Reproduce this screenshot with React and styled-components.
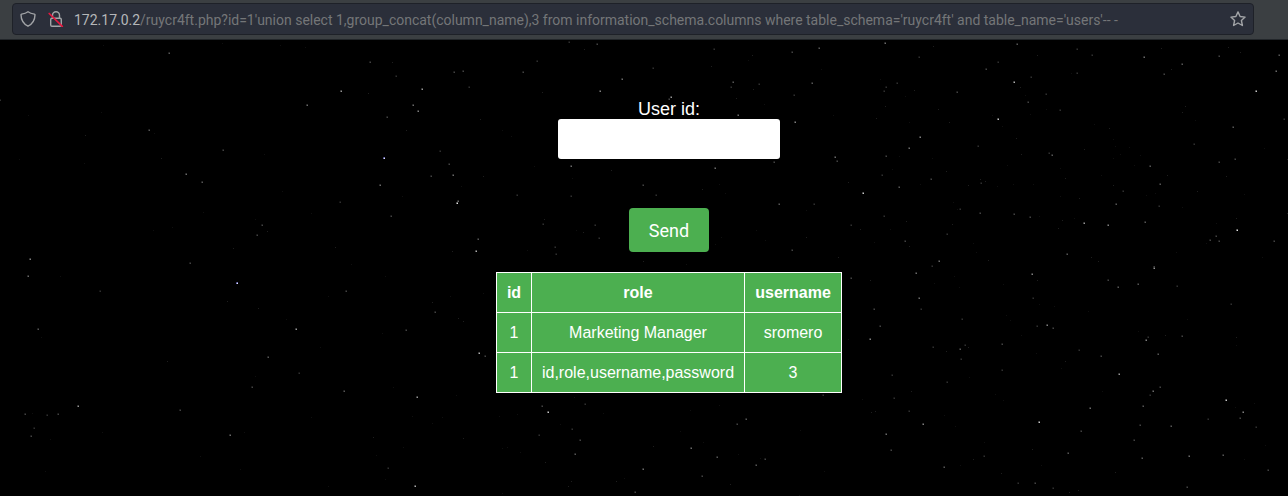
import React from "react";
import styled, { createGlobalStyle } from "styled-components";

const GlobalStyle = createGlobalStyle`
  * { box-sizing: border-box; }
  body {
    margin: 0;
    background: #000;
    font-family: "Liberation Sans", Arial, sans-serif;
    overflow: hidden;
  }
`;

const Window = styled.div`
  display: flex;
  flex-direction: column;
  height: 496px;
`;

const Toolbar = styled.header`
  flex: none;
  height: 40px;
  padding: 3px 34px 0 12px;
  background: #3b3f42;
  border-bottom: 1px solid #22262a;
`;

const AddressBar = styled.div`
  display: flex;
  align-items: center;
  height: 32px;
  padding: 0 7px;
  background: #2b2f3a;
  border: 1px solid #1e2128;
  border-radius: 4px;
`;

const BarIcon = styled.svg`
  flex: none;
  display: block;
  width: 16px;
  height: 16px;
  margin-right: ${(p) => p.$gap || 0}px;
  fill: none;
  stroke: #a2a4a7;
  stroke-width: 1.4;
  stroke-linecap: round;
  stroke-linejoin: round;
`;

const Url = styled.div`
  flex: 1;
  padding-top: 2px;
  font: 14px/20px Roboto, sans-serif;
  letter-spacing: -0.007px;
  color: #747678;
  white-space: nowrap;
`;

const Host = styled.span`
  color: #b5b7b9;
`;

const Page = styled.main`
  position: relative;
  flex: 1;
  padding: 59px 0 0 50px;
  color: #fff;
`;

const Sky = styled.svg`
  position: absolute;
  inset: 0;
  width: 1288px;
  height: 456px;
  shape-rendering: crispEdges;
`;

const Content = styled.div`
  position: relative;
  display: flex;
  flex-direction: column;
  align-items: center;
`;

const Form = styled.form`
  display: flex;
  flex-direction: column;
  align-items: center;
`;

const Label = styled.label`
  font-size: 18px;
  line-height: 20px;
`;

const TextInput = styled.input`
  width: 222px;
  height: 40px;
  padding: 10px;
  border: 0;
  border-radius: 3px;
  background: #fff;
  outline: none;
`;

const SendButton = styled.button`
  width: 80px;
  height: 44px;
  margin-top: 49px;
  padding: 2px 0 0;
  border: 0;
  border-radius: 4px;
  background: #4caf50;
  color: #fff;
  font: 18px/22px Roboto, sans-serif;
`;

const Table = styled.table`
  margin-top: 20px;
  width: 346px;
  table-layout: fixed;
  border-collapse: collapse;
  background: #4caf50;
  font-size: 16px;
  line-height: 19px;
  text-align: center;
`;

const Col = styled.col`
  width: ${(p) => p.$w}px;
`;

const Cell = styled.td`
  height: 40px;
  padding: 0;
  border: 1px solid #fff;
  white-space: nowrap;
`;

/* Star field in tiles: origin, then [x, y, brightness] in thirds of a pixel. */
const TILES = [
  { ox: 0, oy: 0, stars: [
    [508,41,5],[1112,67,4],[1177,68,2],[1190,110,3],[1025,154,8],[1267,149,8],[1106,160,2],[922,196,6],
    [1241,197,6],[1256,215,7],[1161,231,4],[85,225,1],[303,217,1],[449,271,5],[257,286,2],[462,279,1],
    [1219,271,2],[670,330,4],[794,343,1],[484,355,2],[57,358,1],[252,370,1],[1152,355,11],[560,403,6],
    [608,426,5],[1141,435,6],[848,455,1],[1021,488,3],[1175,530,4],[788,557,4],[773,587,4],[803,573,2],
    [767,539,1],[699,624,2],[1006,622,2],[92,659,7],[570,671,4],[460,570,1],[516,563,1],[1054,673,1],
    [1,181,3],[668,9,1],[842,16,1],[916,23,1],[310,17,1],[934,519,1],[1208,469,1],[611,517,1]] },
  { ox: 430, oy: 0, stars: [
    [419,6,3],[503,13,4],[463,27,2],[323,64,3],[73,98,4],[99,95,4],[118,143,3],[279,96,4],[337,158,2],
    [577,119,6],[510,155,7],[669,84,3],[725,171,8],[719,179,4],[852,27,3],[844,80,2],[968,46,2],
    [956,62,1],[1086,38,4],[1168,26,5],[1174,88,1],[909,128,5],[904,143,3],[988,133,3],[971,149,2],
    [1146,130,5],[1093,166,3],[920,176,2],[925,226,6],[1095,247,7],[1003,192,1],[1211,225,1],
    [152,237,2],[217,272,1],[243,289,1],[32,334,3],[59,374,4],[3,408,4],[69,405,6],[160,410,2],[95,438,1],
    [313,378,1],[425,380,6],[545,391,2],[427,416,1],[424,468,3],[261,465,3],[82,490,11],[84,483,6],
    [641,437,4],[679,466,3],[817,447,2],[857,385,6],[867,434,1],[886,461,1],[1032,368,4],[1217,351,6],
    [1223,363,4],[1255,426,2],[1048,494,5],[1154,492,3],[1129,510,1],[1265,557,3],[344,537,2],[339,552,3],
    [495,557,3],[460,577,2],[440,571,1],[508,596,3],[146,599,5],[138,633,9],[67,633,2],[376,622,3],
    [379,644,3],[292,631,1],[641,663,2],[874,592,1],[855,613,1],[1005,600,1],[1086,630,4],[1225,652,2],
    [1130,592,2],[769,673,1],[759,600,1],[980,570,1]] },
  { ox: 858, oy: 0, stars: [
    [82,11,6],[185,52,3],[225,19,2],[477,14,5],[421,68,3],[385,87,4],[537,45,2],[659,28,3],[704,47,3],
    [859,53,6],[909,24,2],[1112,23,2],[1146,38,2],[1085,49,4],[1263,46,5],[1255,95,6],[973,73,5],[941,89,2],
    [918,103,4],[658,99,3],[640,101,1],[521,111,3],[469,127,9],[486,142,2],[503,165,1],[565,163,3],
    [512,188,4],[606,211,3],[565,208,1],[516,223,1],[117,130,3],[84,143,3],[79,155,3],[68,119,1],[83,199,2],
    [56,235,2],[169,150,2],[142,168,1],[299,156,4],[240,208,2],[273,248,2],[155,248,1],[421,237,10],
    [402,225,1],[433,260,1],[186,292,7],[155,326,6],[85,349,4],[123,348,1],[224,355,1],[361,320,3],
    [476,295,2],[491,344,2],[575,341,3],[582,345,5],[680,327,2],[753,265,2],[709,252,1],[767,299,1],
    [772,318,1],[788,344,1],[813,321,1],[765,354,1],[848,347,1],[877,378,5],[830,377,1],[928,405,2],
    [908,434,5],[892,460,1],[864,467,1],[905,500,3],[1008,314,3],[1012,241,1],[983,200,2],[974,216,2],
    [1194,155,10],[1127,261,5],[1278,237,3],[1220,326,1],[1085,366,4],[1133,359,4],[1104,408,2],
    [1017,454,2],[973,501,1],[103,388,1],[74,405,3],[125,441,5],[15,461,10],[221,419,4],[187,432,1],
    [264,393,2],[332,436,2],[366,419,2],[371,430,3],[381,423,2],[419,440,1],[467,432,1],[448,377,1],
    [526,433,1],[607,385,1],[622,415,2],[729,407,1],[765,437,2],[664,476,2],[606,469,1],[797,455,3],
    [776,494,5],[298,507,1],[307,507,3],[285,486,1],[368,521,4],[468,524,4],[516,533,4],[545,529,1],
    [614,540,2],[679,551,8],[750,556,7],[863,548,5],[648,534,1],[80,529,3],[146,545,2],[97,567,1],
    [6,567,2],[49,607,1],[143,605,4],[154,619,2],[269,584,3],[284,554,2],[345,609,1],[354,636,1],
    [243,665,6],[222,680,3],[391,660,2],[601,566,2],[629,644,5],[699,651,2],[721,664,2],[888,683,7],
    [954,636,1],[1137,571,11],[1134,536,2],[1074,549,1],[1076,588,4],[1056,601,4],[1085,605,4],[1044,609,1],
    [1250,603,4],[1287,521,2],[1287,357,2],[1160,463,1],[1214,651,1]] },
  { ox: 0, oy: 228, stars: [
    [84,24,6],[180,26,1],[300,69,3],[712,47,11],[683,100,2],[776,122,2],[858,153,1],[889,184,8],
    [1040,69,4],[985,85,1],[1157,25,1],[1220,186,4],[1148,195,1],[961,238,1],[116,184,5],[123,208,1],
    [503,280,2],[804,267,5],[897,315,3],[757,358,4],[767,324,1],[1032,370,5],[1180,359,1],[1251,389,8],
    [235,416,8],[75,439,4],[143,441,3],[174,439,4],[98,436,1],[103,481,3],[94,505,4],[152,513,1],
    [540,427,4],[691,501,6],[732,492,1],[306,492,1],[1238,446,1],[1120,507,2],[1211,539,1],[1165,602,3],
    [1155,633,1],[1247,655,9],[985,656,1],[720,603,1],[602,565,1],[137,611,1],[933,447,1],[1129,563,1]] },
  { ox: 430, oy: 228, stars: [
    [17,134,4],[7,103,2],[61,84,1],[85,151,2],[99,160,2],[159,76,1],[147,257,9],[167,265,4],[80,382,1],
    [337,415,4],[355,433,10],[465,409,3],[432,388,1],[390,469,1],[428,483,3],[327,503,3],[450,516,4],
    [436,558,5],[346,583,2],[100,511,2],[216,542,1],[231,539,1],[270,554,1],[8,467,1],[36,449,1],
    [208,446,1],[262,438,1],[641,605,6],[671,536,2],[785,540,6],[821,524,1],[816,625,4],[861,567,5],
    [925,558,1],[978,593,5],[991,571,1],[1007,573,4],[901,649,2],[950,455,5],[922,469,4],[780,426,1],
    [868,411,1],[1180,382,3],[1111,486,1],[1265,30,4],[1255,213,1],[616,673,4],[424,641,2],[414,655,2],
    [560,641,2],[584,632,1],[218,675,1],[1108,682,1],[1183,610,1],[520,435,1],[752,490,1]] },
  { ox: 858, oy: 228, stars: [
    [36,36,2],[175,16,6],[228,45,1],[288,24,1],[305,58,1],[184,92,6],[190,124,3],[48,123,4],[68,175,4],
    [36,213,7],[312,154,3],[435,49,1],[523,20,7],[538,36,2],[525,91,3],[544,109,1],[589,114,1],[690,129,1],
    [752,36,4],[780,59,5],[841,50,5],[888,1,8],[957,55,3],[1120,109,3],[445,142,1],[456,157,1],[538,174,3],
    [568,173,7],[587,181,4],[491,203,1],[434,229,4],[323,231,3],[331,239,2],[308,244,5],[309,273,3],
    [226,239,3],[264,250,2],[433,306,3],[535,256,1],[621,279,2],[609,301,1],[665,246,3],[729,264,4],
    [785,319,8],[864,217,7],[870,208,3],[922,201,2],[972,204,4],[987,155,1],[900,259,5],[841,190,1],
    [1134,209,2],[1135,231,1],[102,322,3],[161,369,2],[109,392,3],[155,431,3],[52,431,2],[40,433,2],
    [13,394,1],[196,468,7],[84,499,6],[100,547,4],[260,441,1],[293,476,1],[267,344,3],[335,327,1],
    [411,379,1],[437,396,1],[543,462,10],[697,422,6],[732,371,1],[669,491,4],[630,555,5],[886,369,6],
    [906,358,4],[877,382,3],[857,415,5],[848,471,4],[941,474,5],[830,516,4],[852,571,5],[995,566,6],
    [1106,398,10],[1157,432,7],[1148,451,4],[1051,455,3],[1131,419,1],[1194,479,3],[1097,562,5],
    [1230,607,4],[1160,574,1],[989,658,4],[260,597,5],[308,593,1],[345,574,2],[379,566,3],[523,543,2],
    [429,616,2],[533,645,4],[480,647,3],[585,660,3],[660,666,2],[633,674,2],[773,613,2],[550,591,1],
    [379,522,1],[1223,531,1],[1190,406,1]] },
];

const BLUE_LEVEL = 11;

function grey(v, blue) {
  const c = Math.round(Math.min(v, 255));
  return `rgb(${c},${c},${Math.min(255, Math.round(c * (blue ? 1.6 : 1)))})`;
}

function Star({ x, y, level, blue }) {
  const core = level * 14 + level * level * 0.6;
  return (
    <g>
      {level >= 3 && (
        <>
          <rect x={x} y={y - 1} width="1" height="1" fill={grey(core * 0.5, blue)} />
          <rect x={x - 1} y={y} width="1" height="1" fill={grey(core * 0.5, blue)} />
          <rect x={x - 1} y={y - 1} width="1" height="1" fill={grey(core * 0.3, blue)} />
        </>
      )}
      <rect x={x} y={y} width="1" height="1" fill={grey(core, blue)} />
    </g>
  );
}

function StarField() {
  return (
    <Sky viewBox="0 0 1288 456" aria-hidden="true">
      {TILES.map((tile) =>
        tile.stars.map(([x, y, level]) => (
          <Star
            key={`${tile.ox}-${tile.oy}-${x}-${y}`}
            x={tile.ox + Math.floor(x / 3)}
            y={tile.oy + Math.floor(y / 3)}
            level={level}
            blue={level === BLUE_LEVEL && tile.ox === 0}
          />
        ))
      )}
    </Sky>
  );
}

const ShieldIcon = () => (
  <BarIcon viewBox="0 0 16 16" $gap={12}>
    <path d="M8 .8C6.3 2.1 4 2.8 1.6 3.1 1.2 3.2 1 3.4 1 3.8 1.1 9 2.7 12.6 8 15.2 13.3 12.6 14.9 9 15 3.8c0-.4-.2-.6-.6-.7C12 2.8 9.7 2.1 8 .8z" />
  </BarIcon>
);

const InsecureIcon = () => (
  <BarIcon viewBox="0 0 16 16" $gap={10}>
    <path d="M4.5 7.2V4.3a3.5 3.5 0 0 1 7 0v2.9" />
    <rect x="2.7" y="7.2" width="10.6" height="8" rx="1.3" />
    <path d="M1.2 2.5 14.3 15.3" stroke="#e5173f" strokeWidth="1.7" />
  </BarIcon>
);

const StarIcon = () => (
  <BarIcon viewBox="0 0 16 16">
    <path d="M8 .9l2.1 4.6 5 .6-3.7 3.4 1 5L8 12l-4.4 2.500 1-5L.9 6.100l5-.6z" />
  </BarIcon>
);

const ROWS = [
  ["1", "Marketing Manager", "sromero"],
  ["1", "id,role,username,password", "3"],
];

export default function App() {
  return (
    <Window>
      <GlobalStyle />
      <Toolbar>
        <AddressBar>
          <ShieldIcon />
          <InsecureIcon />
          <Url>
            <Host>172.17.0.2</Host>
            {"/ruycr4ft.php?id=1'union select 1,group_concat(column_name),3 from information_schema.columns where table_schema='ruycr4ft' and table_name='users'-- -"}
          </Url>
          <StarIcon />
        </AddressBar>
      </Toolbar>
      <Page>
        <StarField />
        <Content>
          <Form onSubmit={(e) => e.preventDefault()}>
            <Label htmlFor="user-id">User id:</Label>
            <TextInput id="user-id" type="text" />
            <SendButton type="submit">Send</SendButton>
          </Form>
          <Table>
            <colgroup>
              <Col $w={35} />
              <Col $w={213} />
              <Col $w={97} />
            </colgroup>
            <thead>
              <tr>
                <Cell as="th">id</Cell>
                <Cell as="th">role</Cell>
                <Cell as="th">username</Cell>
              </tr>
            </thead>
            <tbody>
              {ROWS.map((row, i) => (
                <tr key={i}>
                  {row.map((value, j) => (
                    <Cell key={j}>{value}</Cell>
                  ))}
                </tr>
              ))}
            </tbody>
          </Table>
        </Content>
      </Page>
    </Window>
  );
}
